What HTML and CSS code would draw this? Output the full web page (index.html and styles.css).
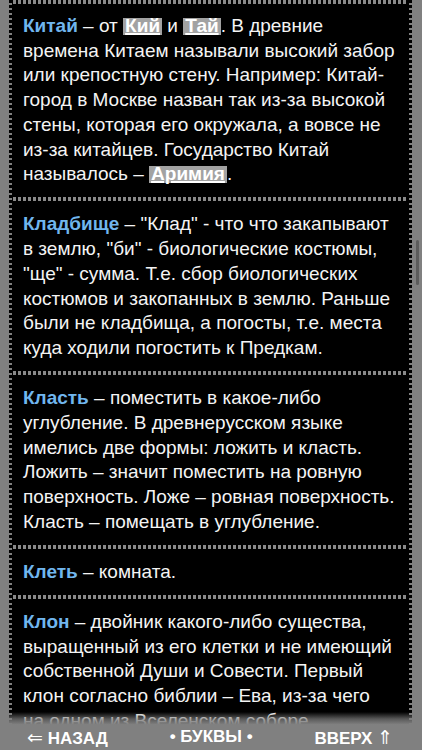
FILE: index.html
```html
<!DOCTYPE html>
<html lang="ru">
<head>
<meta charset="utf-8">
<title>Словарь</title>
<link rel="stylesheet" href="styles.css">
</head>
<body>
<div class="screen">
  <main class="scroll">
    <div class="column">
      <section class="entry">
        <p><b class="word">Китай</b> – от <a class="ref">Кий</a> и <a class="ref">Тай</a>. В древние времена Китаем называли высокий забор или крепостную стену. Например: Китай-город в Москве назван так из-за высокой стены, которая его окружала, а вовсе не из-за китайцев. Государство Китай называлось – <a class="ref">Аримия</a>.</p>
      </section>
      <section class="entry">
        <p><b class="word">Кладбище</b> – "Клад" - что что закапывают в землю, "би" - биологические костюмы, "ще" - сумма. Т.е. сбор биологических костюмов и закопанных в землю. Раньше были не кладбища, а погосты, т.е. места куда ходили погостить к Предкам.</p>
      </section>
      <section class="entry">
        <p><b class="word">Класть</b> – поместить в какое-либо углубление. В древнерусском языке имелись две формы: ложить и класть. Ложить – значит поместить на ровную поверхность. Ложе – ровная поверхность. Класть – помещать в углубление.</p>
      </section>
      <section class="entry">
        <p><b class="word">Клеть</b> – комната.</p>
      </section>
      <section class="entry">
        <p><b class="word">Клон</b> – двойник какого-либо существа, выращенный из его клетки и не имеющий собственной Души и Совести. Первый клон согласно библии – Ева, из-за чего на одном из Вселенском соборе</p>
      </section>
    </div>
    <div class="fade"></div>
    <div class="scrollbar"></div>
  </main>
  <nav class="bar">
    <span class="nav"><span class="arrow">⇐</span> НАЗАД</span>
    <span class="nav">• БУКВЫ •</span>
    <span class="nav">ВВЕРХ <span class="arrow">⇑</span></span>
  </nav>
</div>
</body>
</html>
```
FILE: styles.css
```css
html, body {
  margin: 0;
  padding: 0;
}
body {
  background: #808080;
  font-family: "Liberation Sans", Arial, sans-serif;
}
.screen {
  width: 422px;
  height: 750px;
  display: flex;
  flex-direction: column;
  overflow: hidden;
}
.scroll {
  flex: 1;
  position: relative;
  overflow: hidden;
  padding: 0 10px 0 9px;
}
.column {
  background:
    repeating-linear-gradient(to bottom, #000 0 3px, #808080 3px 5px) left top / 3px 100% no-repeat,
    repeating-linear-gradient(to bottom, #000 0 3px, #808080 3px 5px) right top / 3px 100% no-repeat,
    #000;
}
.entry {
  padding: 15px 16px 10.5px 14px;
  background:
    repeating-linear-gradient(to right, #8a8a8a 0 3px, #000 3px 5px) 4px 0 / calc(100% - 8px) 4px no-repeat;
}
.entry:first-child {
  padding-top: 14px;
}
.entry p {
  margin: 0;
  color: #f4f4f4;
  font-size: 19px;
  line-height: 24.7px;
}
.word {
  color: #70b6ee;
  font-weight: bold;
}
.ref {
  display: inline-block;
  line-height: 16px;
  padding: 0 2px 1px;
  background: #a2a2a2;
  color: #fff;
  font-weight: bold;
  text-decoration: underline;
  text-decoration-thickness: 2px;
  text-underline-offset: 1px;
}
.fade {
  position: absolute;
  left: 0;
  right: 0;
  bottom: 0;
  height: 14px;
  background: linear-gradient(to bottom, rgba(128,128,128,0), rgba(128,128,128,0.7) 50%, #808080 90%);
}
.scrollbar {
  position: absolute;
  right: 3px;
  top: 240px;
  width: 3px;
  height: 45px;
  border-radius: 2px;
  background: #5c5c5c;
}
.bar {
  height: 22px;
  flex: none;
  display: flex;
  justify-content: space-between;
  align-items: center;
  padding: 0 29px 2px 27px;
  color: #fff;
  font-size: 17px;
  font-weight: bold;
}
.arrow {
  font-family: "DejaVu Sans", sans-serif;
  font-weight: normal;
  font-size: 19px;
}
```
